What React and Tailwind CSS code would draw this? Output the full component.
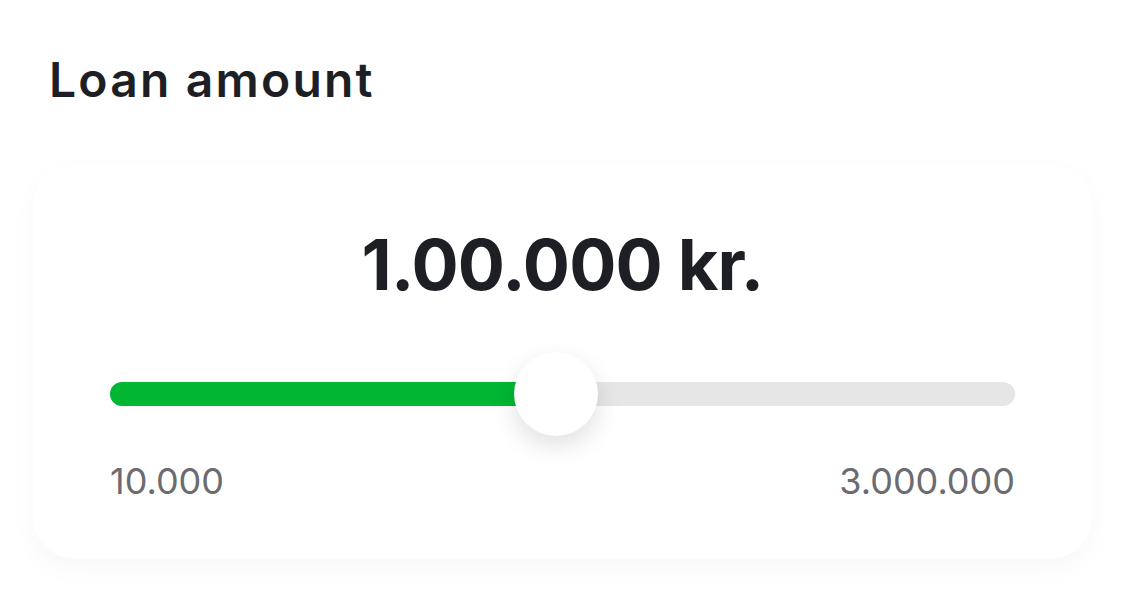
import React from "react";

export default function App() {
  const pct = 49.3;
  return (
    <div className="w-[1125px] h-[609px] bg-white overflow-hidden" style={{ fontFamily: "Inter, 'Noto Sans', sans-serif" }}>
      <div className="pt-[50px] pl-[49px]">
        <h1 className="text-[48px] leading-[60px] font-semibold text-[#1e1f24] tracking-[2.2px]">Loan amount</h1>
      </div>
      <div className="mx-[33px] mt-[55px] h-[393px] rounded-[40px] bg-white shadow-[0_10px_28px_rgba(0,0,0,0.03)] px-[77px] pt-[55px]">
        <div className="text-center text-[70px] leading-[90px] font-bold text-[#1e1f24] tracking-[-0.8px]">1.00.000 kr.</div>
        <div className="relative mt-[72px] h-[24px] rounded-full bg-[#e6e6e6]">
          <div className="absolute left-0 top-0 h-full rounded-full bg-[#00b633]" style={{ width: pct + "%" }} />
          <div
            className="absolute top-1/2 w-[84px] h-[84px] -translate-x-1/2 -translate-y-1/2 rounded-full bg-white shadow-[0_10px_24px_rgba(0,0,0,0.12)]"
            style={{ left: pct + "%" }}
          />
        </div>
        <div className="mt-[55px] flex justify-between text-[36px] leading-[40px] text-[#6b6b70]">
          <span>10.000</span>
          <span>3.000.000</span>
        </div>
      </div>
    </div>
  );
}
